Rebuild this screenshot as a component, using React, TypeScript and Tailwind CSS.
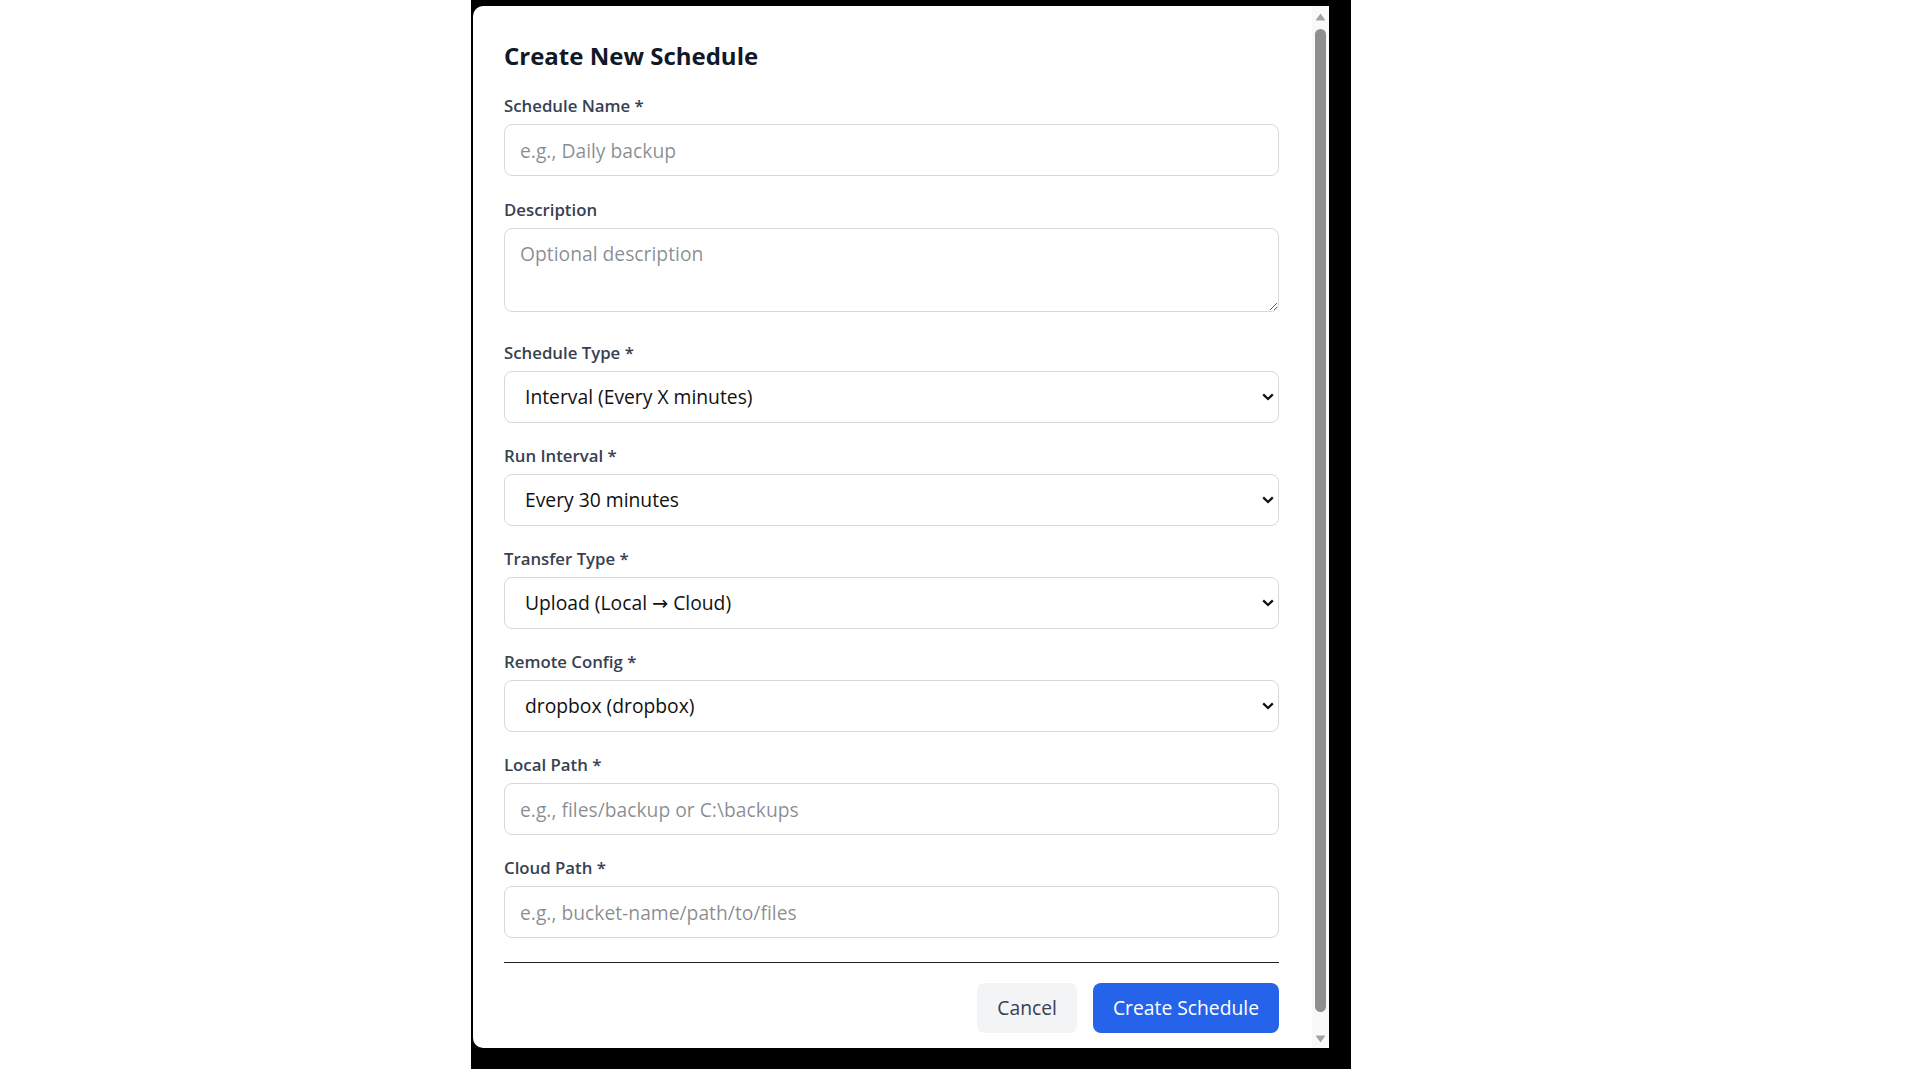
import React from "react";

type FieldProps = {
  label: string;
  children: React.ReactNode;
  className?: string;
};

const Field = ({ label, children, className }: FieldProps) => (
  <div className={className}>
    <label className="block mb-[6px] text-[16.8px] leading-[25px] font-semibold text-[#374151]">
      {label}
    </label>
    {children}
  </div>
);

const inputCls =
  "block w-full h-[52px] px-[15px] border border-[#d6d8de] rounded-[8px] bg-white text-[19.3px] leading-[30px] text-[#111827] outline-none";

const Select = ({ value, options }: { value: string; options: string[] }) => (
  <div className="relative">
    <select
      defaultValue={value}
      className="block w-full h-[52px] pl-[20px] pr-[30px] border border-[#d6d8de] rounded-[8px] bg-white text-[19.3px] leading-[30px] text-[#111111] appearance-none outline-none"
    >
      {options.map((o) => (
        <option key={o} value={o}>
          {o}
        </option>
      ))}
    </select>
    <svg
      className="absolute right-[5px] top-1/2 -translate-y-1/2 pointer-events-none"
      width="12"
      height="8"
      viewBox="0 0 12 8"
    >
      <path d="M1.2 1.4 L6 6 L10.8 1.4" fill="none" stroke="#111" strokeWidth="2.3" />
    </svg>
  </div>
);

const Scrollbar = () => (
  <div className="w-[17px] shrink-0 bg-[#f9f9f9] flex flex-col items-center pt-[7px] pb-[5px]">
    <svg width="11" height="8" viewBox="0 0 11 8">
      <polygon points="5.5,0.5 10.5,7.5 0.5,7.5" fill="#a3a3a3" />
    </svg>
    <div className="mt-[8px] w-[11px] flex-1 rounded-full bg-[#8f8f8f]" />
    <div className="h-[23px]" />
    <svg width="11" height="8" viewBox="0 0 11 8">
      <polygon points="0.5,0.5 10.5,0.5 5.5,7.5" fill="#a3a3a3" />
    </svg>
  </div>
);

export default function App() {
  return (
    <div className="min-h-screen bg-white font-['Open_Sans','DejaVu_Sans','Inter',sans-serif]">
      <div className="ml-[471px] w-[880px] bg-black pl-[2px] pt-[6px] pr-[22px] pb-[21px]">
        <div className="h-[1042px] flex bg-white rounded-l-[10px] overflow-hidden">
          <div className="flex-1 overflow-hidden pl-[31px] pr-[33px] pt-[32px]">
            <h2 className="text-[24px] leading-[35px] font-bold text-[#111827] mb-[20px]">
              Create New Schedule
            </h2>
            <div className="flex flex-col gap-[20px]">
              <Field label="Schedule Name *">
                <input className={inputCls} placeholder="e.g., Daily backup" />
              </Field>
              <Field label="Description" className="pt-[1px] pb-[8px]">
                <textarea
                  className="block w-full h-[84px] px-[15px] py-[10px] border border-[#d6d8de] rounded-[8px] bg-white text-[19.3px] leading-[30px] text-[#111827] outline-none"
                  placeholder="Optional description"
                />
              </Field>
              <Field label="Schedule Type *">
                <Select
                  value="Interval (Every X minutes)"
                  options={["Interval (Every X minutes)", "Daily", "Weekly", "Cron expression"]}
                />
              </Field>
              <Field label="Run Interval *">
                <Select
                  value="Every 30 minutes"
                  options={["Every 15 minutes", "Every 30 minutes", "Every hour"]}
                />
              </Field>
              <Field label="Transfer Type *">
                <Select
                  value="Upload (Local → Cloud)"
                  options={["Upload (Local → Cloud)", "Download (Cloud → Local)", "Sync"]}
                />
              </Field>
              <Field label="Remote Config *">
                <Select value="dropbox (dropbox)" options={["dropbox (dropbox)"]} />
              </Field>
              <Field label="Local Path *">
                <input className={inputCls} placeholder="e.g., files/backup or C:\backups" />
              </Field>
              <Field label="Cloud Path *">
                <input className={inputCls} placeholder="e.g., bucket-name/path/to/files" />
              </Field>
            </div>
            <div className="mt-[24px] border-t border-[#222] pt-[20px] pb-[32px] flex justify-end gap-[16px]">
              <button className="h-[50px] px-[20px] rounded-[8px] bg-[#f3f4f6] text-[19.3px] leading-[30px] text-[#374151]">
                Cancel
              </button>
              <button className="h-[50px] px-[20px] rounded-[8px] bg-[#2563eb] text-[19.3px] leading-[30px] text-white">
                Create Schedule
              </button>
            </div>
          </div>
          <Scrollbar />
        </div>
      </div>
    </div>
  );
}
